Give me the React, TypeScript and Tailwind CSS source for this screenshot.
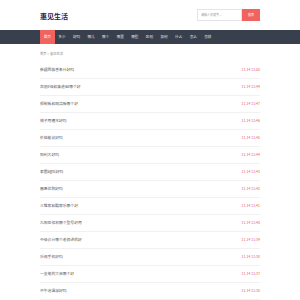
import React from "react";

const navItems = ["首页", "多少", "好吗", "哪儿", "哪个", "哪里", "哪些", "区别", "如何", "什么", "怎么", "怎样"];

const rows: [string, string][] = [
  ["新疆回族香条什好吗", "11-14 11:50"],
  ["奔驰e级和奥迪a6哪个好", "11-14 11:49"],
  ["预制板和现浇板哪个好", "11-14 11:47"],
  ["梳子用檀木好吗", "11-14 11:46"],
  ["价格能谈好吗", "11-14 11:45"],
  ["阳利大好吗", "11-14 11:44"],
  ["泰国ag叫好吗", "11-14 11:43"],
  ["感恩优购好吗", "11-14 11:42"],
  ["三维家和酷家乐哪个好", "11-14 11:41"],
  ["九阳豆浆机哪个型号好用", "11-14 11:40"],
  ["中级会计哪个老师讲的好", "11-14 11:39"],
  ["乐视手机好吗", "11-14 11:38"],
  ["一支笔的文具哪个好", "11-14 11:37"],
  ["中午泡温泉好吗", "11-14 11:35"],
];

export default function App() {
  return (
    <div
      className="w-[300px] h-[300px] overflow-hidden bg-white"
      style={{ fontFamily: '"Noto Sans CJK SC", "Noto Sans", sans-serif' }}
    >
      <header className="h-[30px]">
        <div className="w-[220px] mx-auto h-full flex items-center justify-between">
          <div className="text-[7px] leading-[8px] font-bold text-[#2b2450] pt-[1px]">惠见生活</div>
          <div className="flex h-[12px]">
            <div className="w-[45px] h-full border border-[#e5e5e5] flex items-center pl-[3px] text-[3px] text-[#999]">
              请输入关键字...
            </div>
            <div className="w-[18px] h-full bg-[#f0635f] flex items-center justify-center text-[3px] text-white">
              搜索
            </div>
          </div>
        </div>
      </header>
      <nav className="h-[14px] bg-[#383f4d]">
        <div className="w-[220px] mx-auto h-full flex">
          {navItems.map((n, i) => (
            <div
              key={n}
              className={
                i === 0
                  ? "w-[14.6px] h-full flex items-center justify-center text-[3.6px] text-white bg-[#f0635f]"
                  : "w-[14.6px] h-full flex items-center justify-center text-[3.6px] text-[#e8e8e8]"
              }
            >
              {n}
            </div>
          ))}
        </div>
      </nav>
      <div className="w-[220px] mx-auto">
        <div className="pt-[8px] h-[17.5px] text-[3.3px] leading-[4px] text-[#888]">首页 &gt; 惠见生活</div>
        {rows.map(([t, d]) => (
          <div key={t} className="h-[17px] border-b border-[#f1f1f1] flex items-center justify-between">
            <span className="text-[3.8px] text-[#555]">{t}</span>
            <span className="text-[3.5px] text-[#e4605c]">{d}</span>
          </div>
        ))}
      </div>
    </div>
  );
}
